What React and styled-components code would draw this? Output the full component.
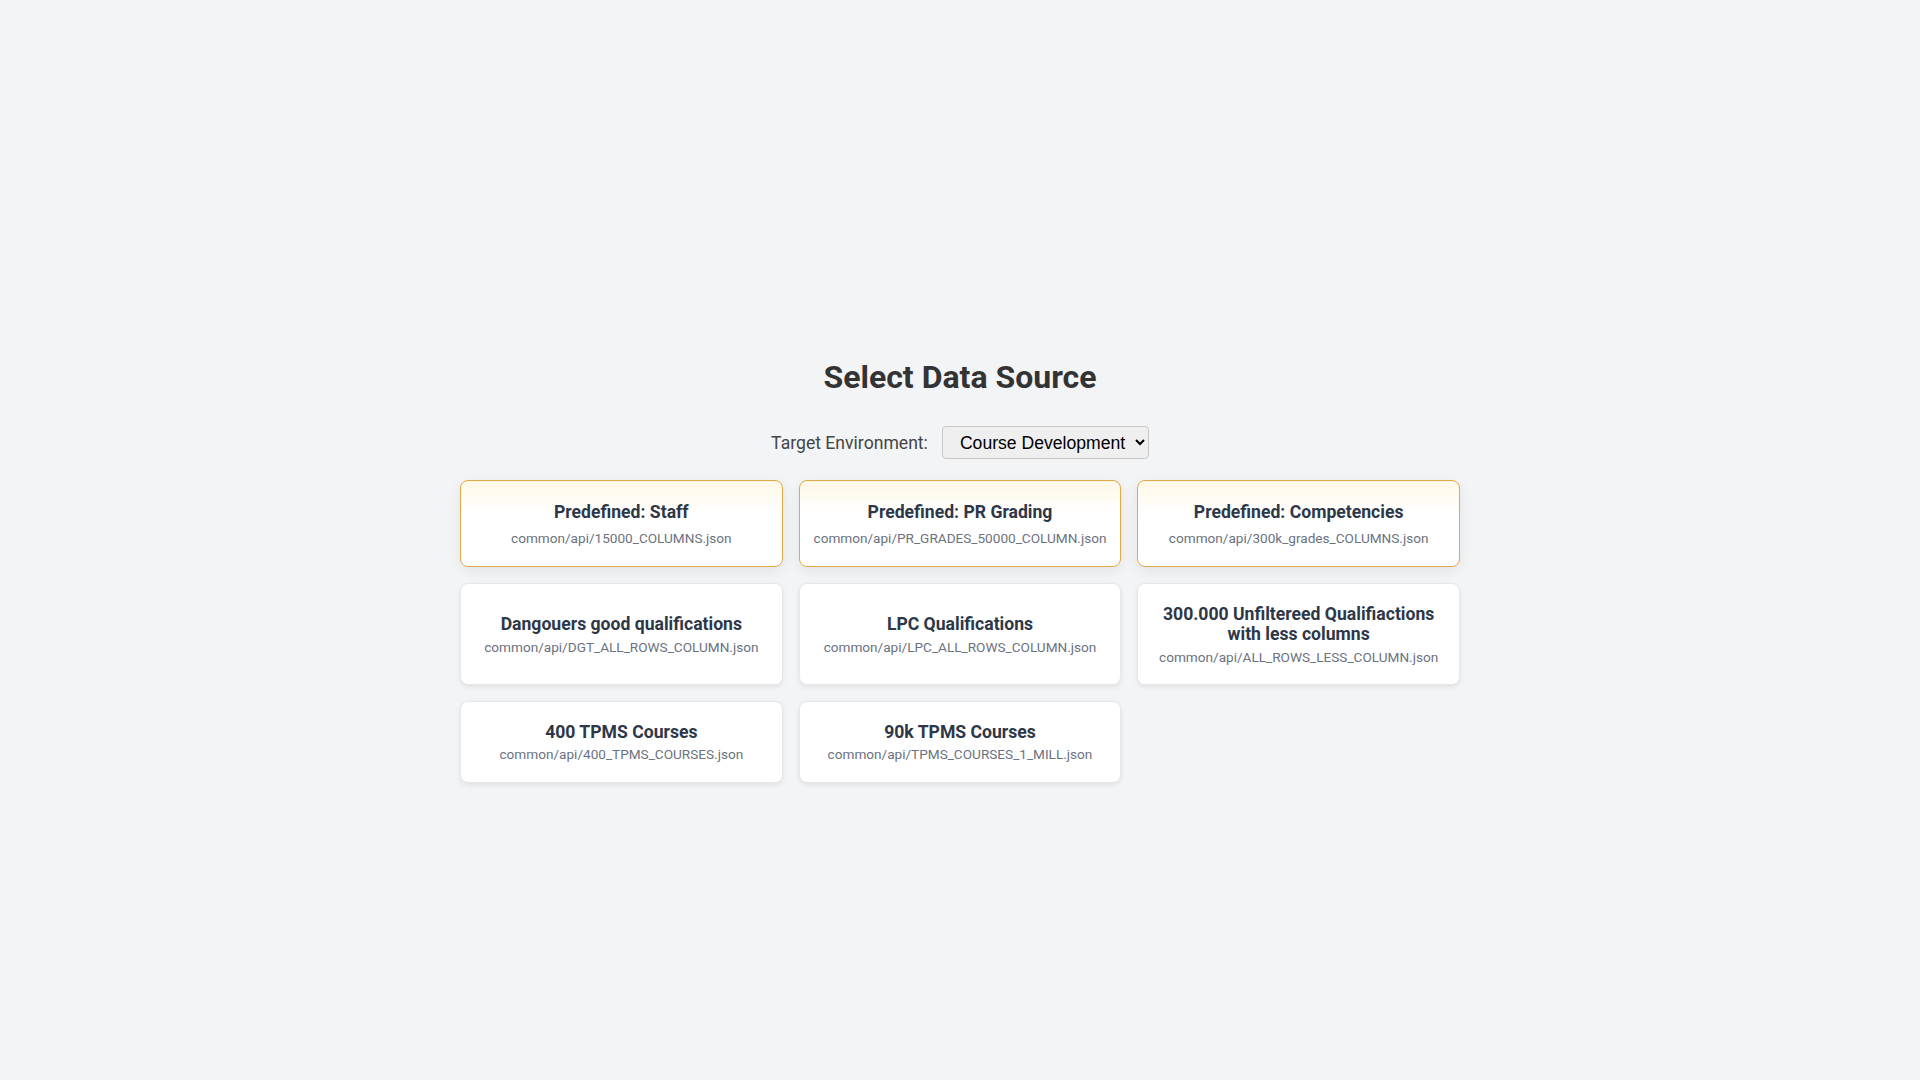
import React from "react";
import styled, { createGlobalStyle, css } from "styled-components";

const GlobalStyle = createGlobalStyle`
  html, body {
    margin: 0;
    padding: 0;
    background: #f3f4f6;
    font-family: Roboto, "Noto Sans", Arial, sans-serif;
  }
  * { box-sizing: border-box; }
`;

const Page = styled.main`
  min-height: 100vh;
  display: flex;
  align-items: center;
  justify-content: center;
  padding: 61px 20px 0;
`;

const Content = styled.section`
  width: 100%;
  max-width: 1000px;
  display: flex;
  flex-direction: column;
  align-items: center;
`;

const Heading = styled.h1`
  margin: 0 0 30px;
  font-size: 32px;
  line-height: 1.2;
  font-weight: 700;
  color: #333333;
`;

const EnvRow = styled.div`
  display: flex;
  align-items: center;
  gap: 14px;
  height: 33px;
  margin-bottom: 21px;
`;

const EnvLabel = styled.label`
  font-size: 17.6px;
  color: #444444;
`;

const EnvSelect = styled.select`
  height: 33px;
  font-family: "Liberation Sans", Arial, sans-serif;
  font-size: 17.6px;
  color: #000;
  background-color: #efefef;
  border: 1px solid #c8c8c8;
  border-radius: 4px;
  padding: 0 6px 0 13px;
`;

const Grid = styled.div`
  width: 100%;
  display: grid;
  grid-template-columns: repeat(3, minmax(0, 1fr));
  gap: 16px;
`;

const Card = styled.button`
  min-width: 0;
  display: flex;
  flex-direction: column;
  align-items: center;
  justify-content: center;
  text-align: center;
  font-family: inherit;
  cursor: pointer;
  border-radius: 8px;
  padding: 19.5px 16px;
  background: #ffffff;
  border: 1px solid #e6e7ea;
  box-shadow: 0 2px 5px rgba(0, 0, 0, 0.08);
  ${(p) =>
    p.$predefined &&
    css`
      padding: 20.5px 16px;
      border-color: #e0a846;
      background: linear-gradient(180deg, #fff8e6 0%, #ffffff 38%);
      box-shadow: 0 4px 14px rgba(0, 0, 0, 0.07);
    `}
`;

const CardTitle = styled.span`
  display: block;
  font-size: 17.6px;
  line-height: 20.5px;
  font-weight: 700;
  color: #2d3748;
  margin-bottom: ${(p) => (p.$predefined ? "7.5px" : "4px")};
`;

const CardPath = styled.span`
  display: block;
  font-size: 13.6px;
  line-height: 16px;
  color: #6b7280;
`;

const sources = [
  { title: "Predefined: Staff", path: "common/api/15000_COLUMNS.json", predefined: true },
  { title: "Predefined: PR Grading", path: "common/api/PR_GRADES_50000_COLUMN.json", predefined: true },
  { title: "Predefined: Competencies", path: "common/api/300k_grades_COLUMNS.json", predefined: true },
  { title: "Dangouers good qualifications", path: "common/api/DGT_ALL_ROWS_COLUMN.json" },
  { title: "LPC Qualifications", path: "common/api/LPC_ALL_ROWS_COLUMN.json" },
  { title: "300.000 Unfiltereed Qualifiactions with less columns", path: "common/api/ALL_ROWS_LESS_COLUMN.json" },
  { title: "400 TPMS Courses", path: "common/api/400_TPMS_COURSES.json" },
  { title: "90k TPMS Courses", path: "common/api/TPMS_COURSES_1_MILL.json" },
];

export default function App() {
  return (
    <>
      <GlobalStyle />
      <Page>
        <Content>
          <Heading>Select Data Source</Heading>
          <EnvRow>
            <EnvLabel htmlFor="env">Target Environment:</EnvLabel>
            <EnvSelect id="env" defaultValue="dev">
              <option value="dev">Course Development</option>
              <option value="test">Test</option>
              <option value="prod">Production</option>
            </EnvSelect>
          </EnvRow>
          <Grid>
            {sources.map((s) => (
              <Card key={s.path} $predefined={s.predefined}>
                <CardTitle $predefined={s.predefined}>{s.title}</CardTitle>
                <CardPath>{s.path}</CardPath>
              </Card>
            ))}
          </Grid>
        </Content>
      </Page>
    </>
  );
}
